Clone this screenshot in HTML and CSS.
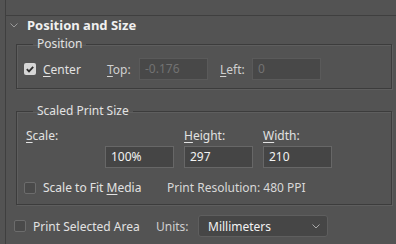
FILE: index.html
```html
<!DOCTYPE html>
<html lang="en">
<head>
  <meta charset="UTF-8">
  <title>Position and Size</title>
  <link rel="stylesheet" href="styles.css">
</head>
<body>
  <div class="panel">
    <div class="section">
      <div class="section-head">
        <svg class="chevron" width="8" height="5" viewBox="0 0 8 5"><path d="M0.5 0.5 L4 4 L7.5 0.5" fill="none" stroke="#9a9a9a" stroke-width="1"/></svg>
        <span class="section-title">Position and Size</span>
      </div>

      <!-- Position -->
      <fieldset class="group">
        <legend>Position</legend>
        <div class="pos-row">
          <span class="check checked">
            <svg width="12" height="12" viewBox="0 0 12 12"><path d="M2.8 6.2 L5 8.4 L9.2 3.8" fill="none" stroke="#2e2e2e" stroke-width="1.8"/></svg>
          </span>
          <span class="pos-center"><u>C</u>enter</span>
          <span class="pos-label"><u>T</u>op:</span>
          <span class="field disabled">-0.176</span>
          <span class="pos-label left-label"><u>L</u>eft:</span>
          <span class="field disabled">0</span>
        </div>
      </fieldset>

      <!-- Scaled Print Size -->
      <fieldset class="group scaled">
        <legend>Scaled Print Size</legend>
        <div class="size-grid">
          <span class="size-label"><u>S</u>cale:</span>
          <span></span>
          <span class="size-label"><u>H</u>eight:</span>
          <span class="size-label"><u>W</u>idth:</span>
          <span></span>
          <span class="field">100%</span>
          <span class="field">297</span>
          <span class="field">210</span>
        </div>
        <div class="fit-row">
          <span class="check"></span>
          <span class="fit-text">Scale to Fit <u>M</u>edia</span>
          <span class="resolution">Print Resolution: 480 PPI</span>
        </div>
      </fieldset>

      <div class="bottom-row">
        <span class="check"></span>
        <span class="area-text">Print Selected Area</span>
        <span class="units-label">Units:</span>
        <span class="select">
          Millimeters
          <svg width="8" height="5" viewBox="0 0 8 5"><path d="M0.5 0.5 L4 4 L7.5 0.5" fill="none" stroke="#a8a8a8" stroke-width="1"/></svg>
        </span>
      </div>
    </div>
  </div>
</body>
</html>
```

FILE: styles.css
```css
body {
  margin: 0;
  background: #535353;
  color: #e2e2e2;
  font-family: "Noto Sans", sans-serif;
  font-size: 12px;
  overflow: hidden;
}

u {
  text-decoration-thickness: 1px;
  text-underline-offset: 2px;
}

.panel {
  box-sizing: border-box;
  margin-left: 5px;
  padding-top: 15px;
  border-left: 1px solid #3f3f3f;
  height: 244px;
}

.section {
  border-top: 1px solid #3f3f3f;
}

.section-head {
  box-sizing: border-box;
  display: flex;
  align-items: center;
  height: 21px;
  padding: 0 0 3px 4px;
}

.chevron {
  margin-right: 9px;
}

.section-title {
  font-weight: bold;
  font-size: 13px;
  color: #f0f0f0;
}

.group {
  margin: 0 4px 0 10px;
  padding: 0;
  min-width: 0;
  border: 1px solid #3c3c3c;
  box-shadow: 1px 1px 0 #5e5e5e, inset 1px 1px 0 #5e5e5e;
}

.group legend {
  margin-left: 16px;
  padding: 0 4px;
  line-height: 14px;
  color: #e2e2e2;
}

.pos-row {
  display: flex;
  align-items: center;
  padding: 7px 0 8px 7px;
}

.check {
  width: 10px;
  height: 10px;
  border: 1px solid #6c6c6c;
  border-radius: 2px;
  background: #4a4a4a;
  flex: none;
}

.check.checked {
  width: 12px;
  height: 12px;
  border: none;
  background: #d6d6d6;
}

.check svg {
  display: block;
}

.pos-center {
  margin-left: 7px;
  width: 64px;
}

.pos-label {
  width: 32px;
  color: #d0d0d0;
}

.left-label {
  margin-left: 12px;
}

.field {
  box-sizing: border-box;
  width: 69px;
  height: 22px;
  padding: 0 5px;
  line-height: 20px;
  background: #454545;
  border: 1px solid #676767;
  color: #f2f2f2;
}

.field.disabled {
  background: #484848;
  border-color: #5a5a5a;
  color: #727272;
}

.scaled {
  margin-top: 15px;
}

.size-grid {
  display: grid;
  grid-template-columns: 79px 79px 79px 69px;
  row-gap: 3px;
  padding: 11px 0 0 9px;
}

.size-label {
  line-height: 14px;
}

.fit-row {
  display: flex;
  align-items: center;
  padding: 11px 0 8px 7px;
}

.fit-text {
  margin-left: 7px;
  width: 124px;
}

.resolution {
  color: #d8d8d8;
}

.bottom-row {
  display: flex;
  align-items: center;
  padding: 10px 0 0 8px;
}

.area-text {
  margin-left: 7px;
  width: 123px;
}

.units-label {
  width: 42px;
  color: #d0d0d0;
}

.select {
  box-sizing: border-box;
  width: 130px;
  height: 22px;
  display: flex;
  align-items: center;
  justify-content: space-between;
  padding: 0 7px 0 9px;
  background: #464646;
  border: 1px solid #5e5e5e;
  border-radius: 3px;
  color: #f2f2f2;
}
```
